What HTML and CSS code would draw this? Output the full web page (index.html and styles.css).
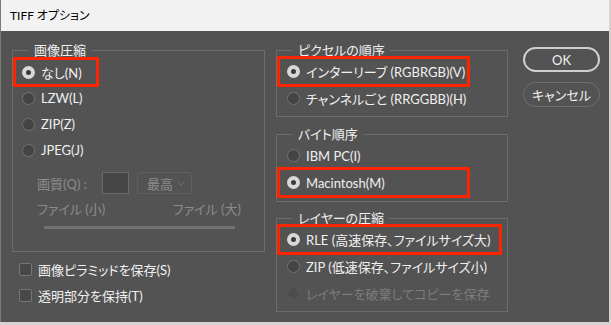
FILE: index.html
```html
<!DOCTYPE html>
<html lang="ja">
<head>
    <meta charset="UTF-8">
    <title>TIFF オプション</title>
    <link rel="stylesheet" href="styles.css">
</head>
<body>

<div class="dialog">
    <div class="titlebar">TIFF オプション</div>

    <div class="content">
        <!-- left column -->
        <div class="col-left">
            <fieldset class="group">
                <legend>画像圧縮</legend>
                <div class="row mark w86"><span class="radio on"></span>なし(N)</div>
                <div class="row"><span class="radio"></span>LZW(L)</div>
                <div class="row"><span class="radio"></span>ZIP(Z)</div>
                <div class="row"><span class="radio"></span>JPEG(J)</div>

                <div class="quality">
                    <span class="dim">画質(Q) :</span>
                    <span class="numbox"></span>
                    <span class="select">最高
                        <svg width="8" height="5" viewBox="0 0 8 5"><path d="M0.5 0.5 L4 4 L7.5 0.5" fill="none" stroke="#6f6f6f" stroke-width="1"/></svg>
                    </span>
                </div>
                <div class="filesize dim">
                    <span>ファイル (小)</span>
                    <span>ファイル (大)</span>
                </div>
                <div class="slider"></div>
            </fieldset>

            <div class="checks">
                <div class="crow"><span class="check"></span>画像ピラミッドを保存(S)</div>
                <div class="crow"><span class="check"></span>透明部分を保持(T)</div>
            </div>
        </div>

        <!-- right column -->
        <div class="col-right">
            <fieldset class="group">
                <legend>ピクセルの順序</legend>
                <div class="row tall mark w193"><span class="radio on"></span>インターリーブ (RGBRGB)(V)</div>
                <div class="row tall"><span class="radio"></span>チャンネルごと (RRGGBB)(H)</div>
            </fieldset>

            <fieldset class="group g2">
                <legend>バイト順序</legend>
                <div class="row tall"><span class="radio"></span>IBM PC(I)</div>
                <div class="row tall mark w193"><span class="radio on"></span>Macintosh(M)</div>
            </fieldset>

            <fieldset class="group g3">
                <legend>レイヤーの圧縮</legend>
                <div class="row tall mark w225"><span class="radio on"></span>RLE (高速保存、ファイルサイズ大)</div>
                <div class="row tall"><span class="radio"></span>ZIP (低速保存、ファイルサイズ小)</div>
                <div class="row tall disabled"><span class="radio"></span>レイヤーを破棄してコピーを保存</div>
            </fieldset>
        </div>

        <!-- buttons -->
        <div class="buttons">
            <button class="btn primary">OK</button>
            <button class="btn">キャンセル</button>
        </div>
    </div>
</div>

</body>
</html>
```

FILE: styles.css
```css
body {
    margin: 0;
    padding: 0;
    width: 611px;
    height: 325px;
    overflow: hidden;
    background-color: #d6d2d2;
    font-family: Lato, "Noto Sans CJK JP", sans-serif;
    font-size: 13px;
    font-feature-settings: "palt";
}
.dialog {
    width: 609px;
    height: 322px;
    background-color: #535353;
    border-left: 1px solid #7a7a7a;
    box-sizing: border-box;
}
.titlebar {
    height: 31px;
    line-height: 31px;
    padding-left: 9px;
    background-color: #f2f2f2;
    color: #000;
    font-size: 12px;
}
.content {
    display: flex;
    padding: 11px 0 0 11px;
    color: #f0f0f0;
}
.col-left {
    width: 253px;
}
.col-right {
    width: 232px;
    margin-left: 11px;
}
.group {
    margin: 0;
    padding: 0 0 4px 0;
    border: 1px solid #6c6c6c;
    min-inline-size: 0;
}
.group legend {
    margin-left: 16px;
    padding: 0 5px;
    line-height: 16px;
    height: 16px;
    color: #f0f0f0;
}
.col-left .group {
    padding: 1px 0 22px 0;
}
.g2 {
    margin-top: 9px;
    padding-bottom: 5px;
}
.g3 {
    margin-top: 8px;
}
.row {
    position: relative;
    display: flex;
    align-items: center;
    height: 26px;
    padding-left: 9px;
    gap: 6px;
    white-space: nowrap;
}
.row.tall {
    height: 27px;
    padding-left: 10px;
}
.mark::before {
    content: "";
    position: absolute;
    left: 0;
    top: -2px;
    bottom: -2px;
    border: 3px solid #ff2400;
    box-sizing: border-box;
}
.w86::before {
    width: 86px;
}
.w193::before {
    width: 193px;
}
.w225::before {
    width: 225px;
}
.radio {
    width: 13px;
    height: 13px;
    border-radius: 50%;
    box-sizing: border-box;
    border: 1px solid #727272;
    background-color: #444;
    flex-shrink: 0;
}
.radio.on {
    border: 4px solid #d8d8d8;
    background-color: #3a3a3a;
}
.disabled {
    color: #7c7c7c;
}
.disabled .radio {
    border-color: #595959;
    background-color: #4d4d4d;
}
.dim {
    color: #8c8c8c;
}
.quality {
    display: flex;
    align-items: center;
    margin-top: 9px;
    padding-left: 24px;
    height: 22px;
}
.numbox {
    width: 27px;
    height: 22px;
    margin-left: 15px;
    box-sizing: border-box;
    border: 1px solid #6a6a6a;
    background-color: #464646;
}
.select {
    display: flex;
    align-items: center;
    justify-content: space-between;
    width: 55px;
    height: 22px;
    margin-left: 8px;
    padding: 0 6px 0 9px;
    box-sizing: border-box;
    border: 1px solid #5f5f5f;
    border-radius: 2px;
    color: #8c8c8c;
}
.filesize {
    display: flex;
    justify-content: space-between;
    margin-top: 7px;
    padding: 0 23px 0 24px;
    line-height: 16px;
}
.slider {
    height: 3px;
    margin: 9px 29px 0 31px;
    background-color: #717171;
}
.checks {
    margin-top: 4px;
    padding-left: 7px;
}
.crow {
    display: flex;
    align-items: center;
    gap: 6px;
    height: 26px;
}
.check {
    width: 13px;
    height: 13px;
    box-sizing: border-box;
    border: 1px solid #767676;
    border-radius: 2px;
    background-color: #484848;
}
.buttons {
    display: flex;
    flex-direction: column;
    gap: 10px;
    margin-left: 15px;
    margin-top: 5px;
}
.btn {
    width: 77px;
    height: 25px;
    border-radius: 13px;
    border: 1px solid #6f6f6f;
    background-color: #535353;
    color: #f0f0f0;
    font-family: Lato, "Noto Sans CJK JP", sans-serif;
    font-size: 13px;
    font-feature-settings: "palt";
    padding: 0;
}
.btn.primary {
    border: 2px solid #cfcfcf;
}
```
